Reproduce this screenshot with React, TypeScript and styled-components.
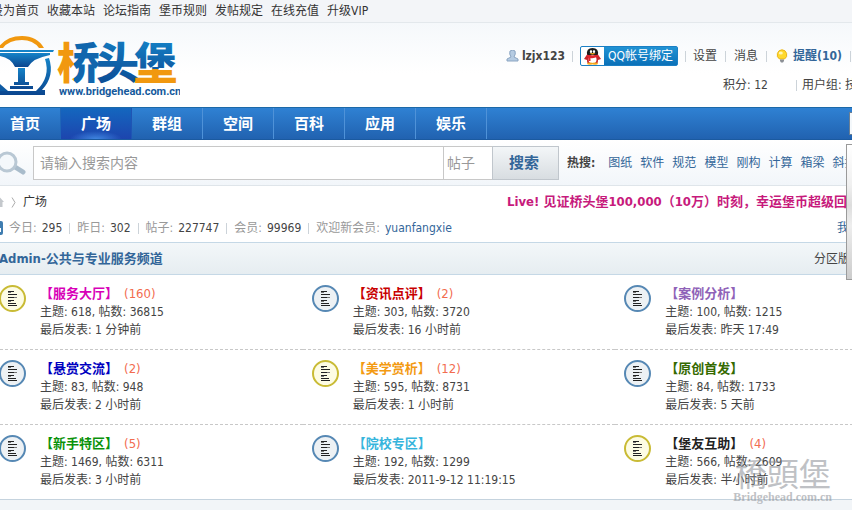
import React from "react";
import styled, { createGlobalStyle } from "styled-components";

const GlobalStyle = createGlobalStyle`
  *, *::before, *::after { box-sizing: border-box; }
  body {
    margin: 0;
    background: #f2f5f8;
    color: #444;
    font: 12px/18px "DejaVu Sans Condensed", "Noto Sans CJK SC", sans-serif;
  }
  a { color: inherit; text-decoration: none; }
  a:hover { text-decoration: underline; }
  h1, h2, h3, p, ul, dl, dd { margin: 0; padding: 0; }
  ul { list-style: none; }
`;

const Root = styled.div`
  position: relative;
  overflow: hidden;
  min-height: 100vh;
`;

const Frame = styled.div`
  margin: 0 -76px 0 -10px;
  white-space: nowrap;
`;

const TopBar = styled.nav`
  display: flex;
  gap: 8px;
  height: 23px;
  padding: 2px 0 0 1px;
  color: #333;
  background: #f3f5f8;
  border-bottom: 1px solid #e3e8ec;
`;

const Header = styled.header`
  display: flex;
  justify-content: space-between;
  height: 84px;
  background: linear-gradient(#f5f8fb, #fff 60%);
`;

const LogoLink = styled.a`
  display: block;
  margin: 10px 0 0 10px;
  height: 70px;
`;

const UserPanel = styled.div`
  display: flex;
  flex-direction: column;
  align-items: flex-end;
  gap: 9px;
  padding-top: 23px;
`;

const UserRow = styled.div<{ $end: number }>`
  display: flex;
  align-items: center;
  height: 20px;
  padding-right: ${(p) => p.$end}px;
`;

const Divider = styled.span<{ $before?: number; $after?: number }>`
  width: 1px;
  height: 11px;
  margin: 0 ${(p) => p.$after ?? 7}px 0 ${(p) => p.$before ?? 7}px;
  background: #ccd3d9;
`;

const UserName = styled.a`
  display: flex;
  align-items: center;
  gap: 3px;
  font-weight: bold;
`;

const Notice = styled.a`
  display: flex;
  align-items: center;
  gap: 5px;
  color: #336699;
  font-weight: bold;
`;

const QQButton = styled.button`
  display: flex;
  align-items: center;
  height: 20px;
  padding: 0;
  border: 1px solid #1b7fc4;
  border-radius: 2px;
  background: #fff;
  color: #fff;
  font: 12px/18px "DejaVu Sans Condensed", "Noto Sans CJK SC", sans-serif;
  cursor: pointer;
`;

const QQLabel = styled.span`
  display: block;
  padding: 0 4px;
  background: linear-gradient(#2193d4, #0a70b8);
`;

const NavBar = styled.nav`
  display: flex;
  justify-content: space-between;
  height: 33px;
  background: linear-gradient(#2f81d3, #2162b0);
  border-top: 1px solid #1c69a8;
  border-bottom: 1px solid #1b5aa0;
`;

const NavList = styled.ul`
  display: flex;
`;

const NavItem = styled.li<{ $active?: boolean }>`
  width: 71px;
  border-right: 1px solid ${(p) => (p.$active ? "#1f55b4" : "#4f92d8")};
  background: ${(p) =>
    p.$active
      ? "radial-gradient(ellipse 26px 8px at 50% 100%, #3f86e0, transparent), linear-gradient(#1467bf, #1d45ae)"
      : "none"};
  &:first-child { border-right-color: #1f66b8; }
`;

const NavLink = styled.a`
  display: block;
  color: #fff;
  font-size: 15px;
  line-height: 32px;
  font-weight: bold;
  text-align: center;
`;

const QuickMenu = styled.button`
  width: 79px;
  height: 23px;
  margin-top: 4px;
  padding: 0;
  border: 1px solid #6a7f94;
  background: #f4f8fb;
`;

const SearchBar = styled.form`
  display: flex;
  align-items: center;
  height: 46px;
  padding: 0 0 0 5px;
  background: linear-gradient(#fff, #f2f6fa);
  border-bottom: 1px solid #dfe5ea;
`;

const SearchField = styled.input`
  width: 411px;
  height: 34px;
  margin-left: 6px;
  padding: 0 6px;
  border: 1px solid #c8c8c8;
  background: #fff;
  color: #666;
  font: 14px/20px "DejaVu Sans Condensed", "Noto Sans CJK SC", sans-serif;
  &::placeholder { color: #999; opacity: 1; }
`;

const SearchScope = styled.select`
  appearance: none;
  width: 48px;
  height: 34px;
  padding: 0 3px;
  border: solid #c8c8c8;
  border-width: 1px 0;
  border-radius: 0;
  background: #fff;
  color: #999;
  font: 14px/20px "DejaVu Sans Condensed", "Noto Sans CJK SC", sans-serif;
`;

const SearchButton = styled.button`
  width: 67px;
  height: 34px;
  padding: 0 3px 0 0;
  border: 1px solid #c0c6cc;
  background: linear-gradient(#f3f6f8, #d8dde1);
  color: #336699;
  font: bold 15px/20px "DejaVu Sans Condensed", "Noto Sans CJK SC", sans-serif;
  cursor: pointer;
`;

const HotWords = styled.div`
  display: flex;
  gap: 8px;
  margin-left: 8px;
  color: #336699;
  strong { margin-right: 5px; color: #444; }
`;

const Main = styled.main`
  background: #fff;
`;

const Crumbs = styled.div`
  display: flex;
  align-items: center;
  justify-content: space-between;
  height: 32px;
`;

const CrumbTrail = styled.nav`
  display: flex;
  align-items: center;
  gap: 7px;
  padding-left: 5px;
  color: #333;
`;

const Announcement = styled.a`
  padding-right: 68px;
  color: #c71a7c;
  font-size: 13px;
  font-weight: bold;
`;

const StatsRow = styled.div`
  display: flex;
  align-items: center;
  justify-content: space-between;
  height: 24px;
  padding-bottom: 4px;
`;

const Stats = styled.dl`
  display: flex;
  align-items: center;
  color: #999;
  svg { margin-right: 6px; }
  dd { margin-left: 5px; color: #444; }
`;

const Link = styled.a`
  color: #336699;
`;

const MyPosts = styled(Link)`
  padding-right: 43px;
`;

const SectionHead = styled.div`
  display: flex;
  align-items: center;
  justify-content: space-between;
  height: 33px;
  padding: 0 66px 0 9px;
  border: solid #c5d8e6;
  border-width: 1px 0;
  background: linear-gradient(#f3f7f9, #e6edf1);
`;

const SectionTitle = styled.h2`
  color: #336699;
  font-size: 13px;
  font-weight: bold;
`;

const ForumGrid = styled.section`
  display: grid;
  grid-template-columns: repeat(3, 1fr);
`;

const Forum = styled.article`
  display: flex;
  gap: 14px;
  height: 75px;
  padding: 10px 0 0 9px;
  border-bottom: 1px dashed #c8c8c8;
  &:nth-last-child(-n + 3) { border-bottom: 1px solid #c5d3de; }
`;

const ForumName = styled.h3<{ $color: string }>`
  color: ${(p) => p.$color};
  font-size: 13px;
  line-height: 18px;
  font-weight: bold;
`;

const NewCount = styled.span`
  margin-left: 6px;
  color: #f26c4f;
  font-weight: normal;
`;

const FloatingPanel = styled.aside`
  position: absolute;
  top: 144px;
  right: 0;
  width: 6px;
  height: 136px;
  border: solid #9a9a9a;
  border-width: 1px 0 1px 1px;
  background: linear-gradient(#fff, #f0f0f0 30%, #ddd 45%, #eee 60%, #ccc);
`;

const Watermark = styled.div`
  position: absolute;
  top: 454px;
  right: 20px;
  color: #8c9096;
  opacity: 0.55;
  text-align: center;
  pointer-events: none;
`;

const WatermarkName = styled.div`
  font: 32px/36px "Noto Sans CJK TC", serif;
`;

const WatermarkSite = styled.div`
  font: bold 12px/14px "Liberation Serif", serif;
`;

function Logo() {
  return (
    <svg width="180" height="70" viewBox="0 33 180 70" role="img" aria-label="桥头堡">
      <defs>
        <linearGradient id="blue" x1="0" y1="0" x2="0" y2="1">
          <stop offset="0" stopColor="#1583c8" />
          <stop offset="1" stopColor="#0b468f" />
        </linearGradient>
        <linearGradient id="split-x" gradientUnits="userSpaceOnUse" x1="58" y1="0" x2="98" y2="0">
          <stop offset="0.41" stopColor="#f1980f" />
          <stop offset="0.41" stopColor="#1166ad" />
        </linearGradient>
        <linearGradient id="split-y" gradientUnits="userSpaceOnUse" x1="0" y1="38" x2="0" y2="86">
          <stop offset="0" stopColor="#1583c8" />
          <stop offset="0.65" stopColor="#0f5ba3" />
          <stop offset="0.65" stopColor="#f1980f" />
        </linearGradient>
      </defs>
      <path d="M-2 48 Q6 36 22 36 Q37 36 44 48 L39 48 Q33 40 22 40 Q9 40 3 48 Z" fill="#f1980f" />
      <path d="M0 50 H54 L53 52 H0 Z" fill="#1583c8" />
      <path d="M0 53 H50 V55 Q33 58 28 67 H15 Q11 58 0 56 Z" fill="url(#blue)" />
      <path d="M18 68 H25 V82 H18 Z M14 82 H29 V85 H14 Z M10 86 H33 V89 H10 Z" fill="url(#blue)" />
      <path d="M49 58 Q55 76 42 90 H45 V95 H0 V91 H36 Q51 77 45 59 Z" fill="url(#blue)" />
      <path d="M0 84 L8 91 H0 Z" fill="#0f5ba3" />
      <g fontFamily="Noto Sans CJK SC" fontWeight="900" fontSize="43">
        <text x="57" y="79" fill="url(#split-x)">桥</text>
        <text x="96" y="79" fill="url(#blue)">头</text>
        <text x="134" y="79" fill="url(#split-y)">堡</text>
      </g>
      <text x="59" y="95" fontFamily="Roboto" fontWeight="bold" fontSize="11" fill="#14599c">
        www.bridgehead.com.cn
      </text>
    </svg>
  );
}

function PersonIcon() {
  return (
    <svg width="13" height="12" viewBox="0 0 13 12" aria-hidden="true">
      <path d="M4 1 Q7 -1 9 1 Q10 4 8 7 L12 9 V11 H1 V9 L5 7 Q3 4 4 1Z" fill="#b5cbe2" stroke="#8ba5c2" />
    </svg>
  );
}

function BulbIcon() {
  return (
    <svg width="12" height="14" viewBox="0 0 12 14" aria-hidden="true">
      <path d="M6 0.8 A5 5 0 0 1 8.5 10 H3.5 A5 5 0 0 1 6 0.8Z" fill="#ffd92e" stroke="#e9b51c" />
      <ellipse cx="4.8" cy="4" rx="2" ry="1.6" fill="#fff6b8" />
      <path d="M4 10.5 H8 V12 L7 13.5 H5 L4 12Z" fill="#8c9096" />
    </svg>
  );
}

function PenguinIcon() {
  return (
    <svg width="23" height="18" viewBox="0 0 23 18" aria-hidden="true">
      <path d="M7 6 L3 12 L6 13 Q6 17 8 17 H15 Q17 17 17 13 L20 12 L16 6Z" fill="#c8242a" />
      <ellipse cx="11.5" cy="12.5" rx="4" ry="4" fill="#fff" />
      <path d="M6 8 Q5 1 11.5 1 Q18 1 17 8Z" fill="#1b1b1b" />
      <ellipse cx="10" cy="4.4" rx="1.1" ry="1.5" fill="#fff" />
      <ellipse cx="13" cy="4.4" rx="1.1" ry="1.5" fill="#fff" />
      <path d="M8.5 6.6 Q11.5 8.4 14.5 6.6 L11.5 6Z" fill="#f6a81c" />
      <path d="M6 7.5 Q11.5 10 17 7.5 V9.5 Q12 12 9.5 11 V14 H7.5 V10.5 L6 9.5Z" fill="#e0232c" />
      <ellipse cx="9" cy="16.6" rx="3" ry="1.2" fill="#f6a81c" />
      <ellipse cx="14" cy="16.6" rx="3" ry="1.2" fill="#f6a81c" />
    </svg>
  );
}

function MagnifierIcon() {
  return (
    <svg width="32" height="26" viewBox="0 0 32 26" aria-hidden="true">
      <path d="M20 17 L28 22" stroke="#a9bccb" strokeWidth="5" strokeLinecap="round" />
      <circle cx="12" cy="12" r="9" fill="#f4f8fb" stroke="#b9c8d4" strokeWidth="3" />
    </svg>
  );
}

function ForumIcon({ fresh }: { fresh: boolean }) {
  return (
    <svg width="27" height="27" viewBox="0 0 27 27" aria-hidden="true">
      <circle cx="13.5" cy="13.5" r="12.5" fill={fresh ? "#fdfce4" : "#edf1f4"} stroke={fresh ? "#c9bb35" : "#5688b4"} strokeWidth="2" />
      <path d="M9 6.5h6M9 9.5h9M9 12.5h6M9 15.5h6M9 18.5h8M9 20.5h9" stroke="#222" />
      <path d="M9 7.5h3M9 16.5h3M15 12.5h3" stroke="#777" />
    </svg>
  );
}

const topLinks = ["设为首页", "收藏本站", "论坛指南", "堡币规则", "发帖规定", "在线充值", "升级VIP"];
const navLinks = ["首页", "广场", "群组", "空间", "百科", "应用", "娱乐"];
const hotWords = ["图纸", "软件", "规范", "模型", "刚构", "计算", "箱梁", "斜拉"];
const stats = [
  ["今日:", "295"],
  ["昨日:", "302"],
  ["帖子:", "227747"],
  ["会员:", "99969"],
];

interface ForumInfo {
  name: string;
  color: string;
  count?: number;
  topics: number;
  posts: number;
  last: string;
  fresh?: boolean;
}

const forums: ForumInfo[] = [
  { name: "服务大厅", color: "#d800b8", count: 160, topics: 618, posts: 36815, last: "1 分钟前", fresh: true },
  { name: "资讯点评", color: "#c80000", count: 2, topics: 303, posts: 3720, last: "16 小时前" },
  { name: "案例分析", color: "#8f62b8", topics: 100, posts: 1215, last: "昨天 17:49" },
  { name: "悬赏交流", color: "#0000c0", count: 2, topics: 83, posts: 948, last: "2 小时前" },
  { name: "美学赏析", color: "#f39a12", count: 12, topics: 595, posts: 8731, last: "1 小时前", fresh: true },
  { name: "原创首发", color: "#356a00", topics: 84, posts: 1733, last: "5 天前" },
  { name: "新手特区", color: "#0a920a", count: 5, topics: 1469, posts: 6311, last: "3 小时前" },
  { name: "院校专区", color: "#36b5dc", topics: 192, posts: 1299, last: "2011-9-12 11:19:15" },
  { name: "堡友互助", color: "#222", count: 4, topics: 566, posts: 2609, last: "半小时前", fresh: true },
];

export default function App() {
  return (
    <Root>
      <GlobalStyle />
      <Frame>
        <TopBar>
          {topLinks.map((t) => (
            <a key={t} href="#">{t}</a>
          ))}
        </TopBar>
        <Header>
          <LogoLink href="#"><Logo /></LogoLink>
          <UserPanel>
            <UserRow $end={77}>
              <UserName href="#"><PersonIcon />lzjx123</UserName>
              <Divider />
              <QQButton type="button"><PenguinIcon /><QQLabel>QQ帐号绑定</QQLabel></QQButton>
              <Divider />
              <a href="#">设置</a>
              <Divider $before={8} $after={8} />
              <a href="#">消息</a>
              <Divider $before={8} $after={9} />
              <Notice href="#"><BulbIcon />提醒(10)</Notice>
              <Divider $before={8} $after={0} />
            </UserRow>
            <UserRow $end={47}>
              <span>积分: 12</span>
              <Divider $before={28} $after={5} />
              <span>用户组: 技术员</span>
            </UserRow>
          </UserPanel>
        </Header>
        <NavBar>
          <NavList>
            {navLinks.map((t) => (
              <NavItem key={t} $active={t === "广场"}><NavLink href="#">{t}</NavLink></NavItem>
            ))}
          </NavList>
          <QuickMenu type="button" aria-label="快捷导航" />
        </NavBar>
        <SearchBar>
          <MagnifierIcon />
          <SearchField type="text" aria-label="搜索" placeholder="请输入搜索内容" />
          <SearchScope aria-label="范围"><option>帖子</option></SearchScope>
          <SearchButton type="button">搜索</SearchButton>
          <HotWords>
            <strong>热搜:</strong>
            {hotWords.map((t) => (
              <a key={t} href="#">{t}</a>
            ))}
          </HotWords>
        </SearchBar>
        <Main>
          <Crumbs>
            <CrumbTrail>
              <svg width="9" height="10" viewBox="0 0 9 10" aria-hidden="true">
                <path d="M0 5 L4.5 0 L9 5 H7.5 V10 H1.5 V5Z" fill="#c4c8cc" />
              </svg>
              <svg width="5" height="11" viewBox="0 0 5 11" aria-hidden="true">
                <path d="M1 0.5 L4 5.5 L1 10.5" fill="none" stroke="#aaa" />
              </svg>
              <a href="#">广场</a>
            </CrumbTrail>
            <Announcement href="#">Live! 见证桥头堡100,000（10万）时刻，幸运堡币超级回馈</Announcement>
          </Crumbs>
          <StatsRow>
            <Stats>
              <svg width="13" height="14" viewBox="0 0 13 14" aria-hidden="true">
                <rect width="13" height="14" rx="2" fill="#3f7db0" />
                <path d="M4 11 V6 M7 11 V3 M10 11 V7" stroke="#fff" strokeWidth="2" />
              </svg>
              {stats.map(([label, value]) => (
                <React.Fragment key={label}>
                  <dt>{label}</dt>
                  <dd>{value}</dd>
                  <Divider />
                </React.Fragment>
              ))}
              <dt>欢迎新会员:</dt>
              <dd><Link href="#">yuanfangxie</Link></dd>
            </Stats>
            <MyPosts href="#">我的帖子</MyPosts>
          </StatsRow>
          <SectionHead>
            <SectionTitle>Admin-公共与专业服务频道</SectionTitle>
            <span>分区版主</span>
          </SectionHead>
          <ForumGrid>
            {forums.map((f) => (
              <Forum key={f.name}>
                <ForumIcon fresh={!!f.fresh} />
                <div>
                  <ForumName $color={f.color}>
                    <a href="#">【{f.name}】</a>
                    {f.count && <NewCount>({f.count})</NewCount>}
                  </ForumName>
                  <p>主题: {f.topics}, 帖数: {f.posts}</p>
                  <p>最后发表: {f.last}</p>
                </div>
              </Forum>
            ))}
          </ForumGrid>
        </Main>
      </Frame>
      <FloatingPanel />
      <Watermark>
        <WatermarkName>橋頭堡</WatermarkName>
        <WatermarkSite>Bridgehead.com.cn</WatermarkSite>
      </Watermark>
    </Root>
  );
}
